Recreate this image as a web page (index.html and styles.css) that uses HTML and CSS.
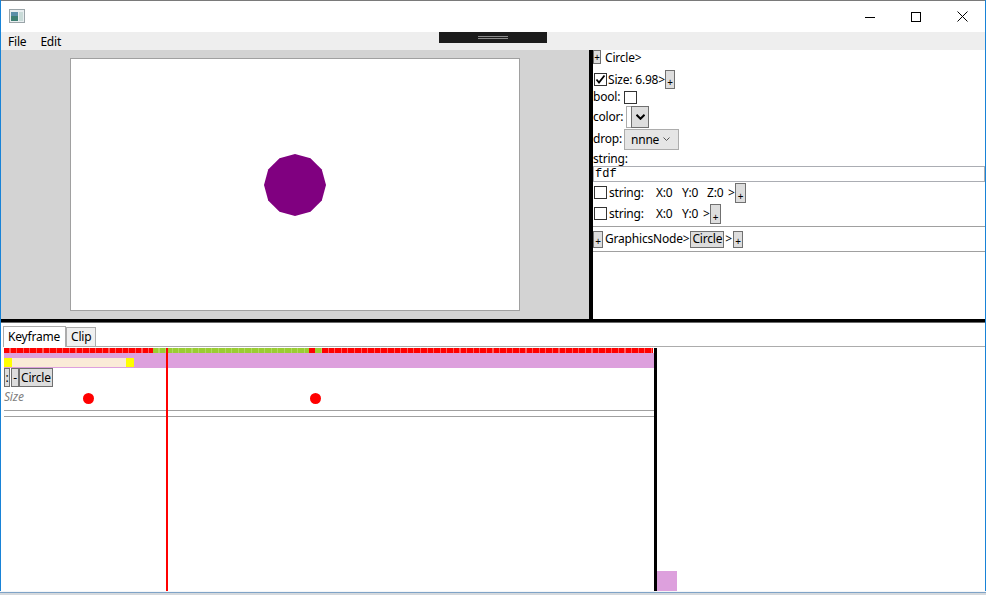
FILE: index.html
```html
<!DOCTYPE html>
<html>
<head>
<meta charset="utf-8">
<link rel="stylesheet" href="styles.css">
</head>
<body>
<div class="window">
  <div class="titlebar">
    <svg class="appicon" width="16" height="14" viewBox="0 0 16 14">
      <rect x="0.5" y="0.5" width="15" height="13" fill="#e8eef0" stroke="#9aa4a8"/>
      <rect x="2" y="3" width="7" height="9" fill="#3d7f72"/>
      <rect x="2" y="3" width="7" height="4" fill="#5a8fa8"/>
      <rect x="10" y="3" width="4" height="9" fill="#c9dbd8"/>
    </svg>
    <div class="spacer"></div>
    <div class="wbtn">
      <svg width="10" height="10" viewBox="0 0 10 10"><path d="M0 5.5H10" stroke="#000" stroke-width="1"/></svg>
    </div>
    <div class="wbtn">
      <svg width="10" height="10" viewBox="0 0 10 10"><rect x="0.5" y="0.5" width="9" height="9" fill="none" stroke="#000"/></svg>
    </div>
    <div class="wbtn">
      <svg width="11" height="11" viewBox="0 0 11 11"><path d="M0.5 0.5L10.5 10.5M10.5 0.5L0.5 10.5" stroke="#000" stroke-width="1"/></svg>
    </div>
  </div>
  <div class="menubar">
    <span class="menuitem">File</span>
    <span class="menuitem">Edit</span>
    <div class="grip"><i></i><i></i></div>
  </div>
  <div class="top">
    <div class="viewport">
      <div class="canvas">
        <svg class="shape" width="64" height="64" viewBox="-32 -32 64 64">
          <polygon fill="#800080" points="0,-31 15.5,-26.8 26.8,-15.5 31,0 26.8,15.5 15.5,26.8 0,31 -15.5,26.8 -26.8,15.5 -31,0 -26.8,-15.5 -15.5,-26.8"/>
        </svg>
      </div>
    </div>
    <div class="vsplit"></div>
    <div class="props">
      <div class="prow r1">
        <span class="btn plus p1">+</span><span class="txt">Circle&gt;</span>
      </div>
      <div class="prow r2">
        <span class="chk checked"><svg width="11" height="11" viewBox="0 0 11 11"><path d="M1.5 5.5L4 8.5L9.5 1.5" fill="none" stroke="#000" stroke-width="1.8"/></svg></span>
        <span class="txt">Size: 6.98&gt;</span><span class="btn plus p2">+</span>
      </div>
      <div class="prow r3">
        <span class="txt">bool:</span><span class="chk bool"></span>
      </div>
      <div class="prow r4">
        <span class="txt">color:</span>
        <span class="colorbox"><span class="cwhite"></span><span class="cbtn"><svg width="9" height="6" viewBox="0 0 9 6"><path d="M0.5 0.8L4.5 4.8L8.5 0.8" fill="none" stroke="#000" stroke-width="2"/></svg></span></span>
      </div>
      <div class="prow r5">
        <span class="txt">drop:</span>
        <span class="combo"><span class="ctext">nnne</span><svg width="7" height="5" viewBox="0 0 7 5"><path d="M0.5 0.5L3.5 3.5L6.5 0.5" fill="none" stroke="#555" stroke-width="1"/></svg></span>
      </div>
      <div class="prow r6"><span class="txt">string:</span></div>
      <div class="textbox">fdf</div>
      <div class="prow r7">
        <span class="chk"></span><span class="txt lbl">string:</span><span class="txt c1">X:0</span><span class="txt c2">Y:0</span><span class="txt c3">Z:0</span><span class="txt gt">&gt;</span><span class="btn plus p3">+</span>
      </div>
      <div class="prow r8">
        <span class="chk"></span><span class="txt lbl">string:</span><span class="txt c1">X:0</span><span class="txt c2">Y:0</span><span class="txt gt">&gt;</span><span class="btn plus p3">+</span>
      </div>
      <div class="prow r9">
        <span class="btn plus p4">+</span><span class="txt gn">GraphicsNode&gt;</span><span class="btn nodebtn">Circle</span><span class="txt">&gt;</span><span class="btn plus p5">+</span>
      </div>
    </div>
  </div>
  <div class="hsplit"></div>
  <div class="bottom">
    <div class="tabs">
      <div class="tab active">Keyframe</div>
      <div class="tab">Clip</div>
    </div>
    <div class="tabbody">
      <div class="track">
        <div class="ruler">
          <span class="seg red" style="width:149px"></span>
          <span class="seg green" style="width:156px"></span>
          <span class="seg red" style="width:6px"></span>
          <span class="seg green" style="width:7px"></span>
          <span class="seg red" style="width:331px"></span>
        </div>
        <div class="clipband">
          <div class="range">
            <span class="ymark"></span><span class="beige"></span><span class="ymark"></span>
          </div>
        </div>
        <div class="noderow">
          <span class="btn small colon">:</span><span class="btn small dash">-</span><span class="btn small">Circle</span>
        </div>
        <div class="sizerow">
          <span class="sizelbl">Size</span>
          <span class="dot" style="left:79px"></span>
          <span class="dot" style="left:306px"></span>
        </div>
        <div class="sep"></div>
      </div>
      <div class="endbar"></div>
      <div class="side"><div class="pinkbox"></div></div>
      <div class="playhead"></div>
    </div>
  </div>
</div>
</body>
</html>
```
FILE: styles.css
```css
* { box-sizing: border-box; }
html, body { margin: 0; padding: 0; }
body {
  width: 986px;
  height: 595px;
  overflow: hidden;
  background: linear-gradient(to bottom, #f4f6f8 0, #f4f6f8 1px, #7fa3c7 1px, #7fa3c7 2px, #d5d9dd 2px) 0 591px / 986px 4px no-repeat, #d5d9dd;
  font-family: "Noto Sans", "Segoe UI", sans-serif;
  font-size: 12px;
  letter-spacing: -0.2px;
  color: #000;
}
.window {
  width: 986px;
  height: 591px;
  border-left: 1px solid #1883d7;
  border-right: 1px solid #1883d7;
  display: flex;
  flex-direction: column;
  background: #fff;
}
.titlebar {
  height: 32px;
  display: flex;
  align-items: center;
  background: #fff;
  border-top: 1px solid #7a7a7a;
}
.appicon { margin-left: 8px; margin-top: -1px; }
.spacer { flex: 1; }
.wbtn {
  width: 46px;
  height: 31px;
  display: flex;
  align-items: center;
  justify-content: center;
}
.menubar {
  height: 18px;
  background: #eeeeee;
  display: flex;
  align-items: center;
  position: relative;
  padding-left: 7px;
  padding-top: 2px;
}
.menuitem { margin-right: 14px; line-height: 16px; }
.grip {
  position: absolute;
  left: 438px;
  top: 0;
  width: 108px;
  height: 11px;
  background: #1c1c1c;
  display: flex;
  flex-direction: column;
  align-items: center;
  padding-top: 4px;
  gap: 1px;
}
.grip i { display: block; width: 30px; height: 1px; background: #8c8c8c; }
.top {
  height: 269px;
  display: flex;
}
.viewport {
  width: 588px;
  background: #d3d3d3;
  padding: 8px 0 0 69px;
}
.canvas {
  width: 450px;
  height: 253px;
  background: #fff;
  border: 1px solid #a0a0a0;
  display: flex;
  align-items: flex-start;
  justify-content: flex-start;
  padding: 94px 0 0 192px;
}
.vsplit { width: 4px; background: #000; }
.props {
  flex: 1;
  background: #fff;
  display: flex;
  flex-direction: column;
}
.prow { display: flex; align-items: center; white-space: nowrap; }
.txt { line-height: 14px; }
.btn {
  background: #dddddd;
  border: 1px solid #707070;
  display: inline-flex;
  align-items: center;
  justify-content: center;
  line-height: 1;
}
.plus { font-size: 10px; align-items: flex-end; padding-bottom: 1px; }
.r1 { height: 20px; align-items: flex-start; }
.r1 .txt { margin-top: 1px; margin-left: 4px; }
.p1 { width: 8px; height: 14px; }
.r2 { height: 19px; }
.p2 { width: 10px; height: 19px; }
.chk {
  width: 13px;
  height: 13px;
  border: 1px solid #333;
  background: #fff;
  display: inline-flex;
  align-items: center;
  justify-content: center;
  margin-left: 1px;
}
.r2 .txt { margin-left: 1px; }
.r3 { height: 16px; }
.chk.bool { margin-left: 4px; }
.r4 { height: 23px; }
.colorbox {
  margin-left: 3px;
  height: 22px;
  display: flex;
}
.cwhite { width: 5px; border: 1px solid #acacac; border-right: none; background: #fff; }
.cbtn {
  width: 18px;
  background: #dddddd;
  border: 1px solid #707070;
  display: flex;
  align-items: center;
  justify-content: center;
}
.r5 { height: 22px; }
.combo {
  margin-left: 2px;
  width: 55px;
  height: 21px;
  background: #e5e5e5;
  border: 1px solid #acacac;
  display: flex;
  align-items: center;
  padding: 0 8px 0 6px;
  justify-content: space-between;
}
.ctext { font-size: 12px; }
.r6 { height: 16px; align-items: flex-end; }
.textbox {
  height: 16px;
  border: 1px solid #abadb3;
  font-family: "Liberation Mono", "DejaVu Sans Mono", monospace;
  font-size: 12px;
  letter-spacing: 0;
  line-height: 14px;
  padding-left: 1px;
}
.r7 { height: 21px; }
.r8 { height: 21px; }
.r7 .p3 { margin-top: 1px; }
.lbl { margin-left: 2px; width: 47px; }
.c1 { width: 26px; }
.c2 { width: 25px; }
.r8 .c2 { width: 21px; }
.c3 { width: 21px; }
.gt { margin-left: 0; width: 7px; }
.p3 { width: 11px; height: 20px; }
.r9 {
  height: 26px;
  margin-top: 2px;
  border-top: 1px solid #a0a0a0;
  border-bottom: 1px solid #a0a0a0;
  align-items: center;
}
.gn { margin-left: 2px; }
.p4 { width: 10px; height: 17px; }
.nodebtn { height: 17px; padding: 0 1px; margin: 0 1px; }
.p5 { width: 10px; height: 17px; margin-left: 1px; }
.hsplit {
  height: 4px;
  background: #000;
  border-bottom: 1px solid #6a6a6a;
}
.bottom {
  flex: 1;
  background: #fff;
  display: flex;
  flex-direction: column;
  padding: 2px 0 0 2px;
}
.tabs { display: flex; align-items: flex-end; height: 21px; }
.tab {
  height: 19px;
  padding: 0 4px;
  border: 1px solid #acacac;
  border-bottom: none;
  background: #f0f0f0;
  line-height: 17px;
}
.tab.active {
  height: 21px;
  background: #fff;
  padding: 0 5px 0 4px;
  margin-bottom: -1px;
  position: relative;
  z-index: 1;
  line-height: 19px;
}
.tabbody {
  flex: 1;
  border-top: 1px solid #acacac;
  padding-top: 1px;
  padding-left: 1px;
  display: flex;
  position: relative;
}
.track { width: 650px; display: flex; flex-direction: column; }
.ruler { height: 5px; display: flex; }
.seg { display: block; height: 5px; }
.seg.red {
  background: repeating-linear-gradient(90deg, #ff0000 0, #ff0000 5.5px, #ff5a5a 5.5px, #ff5a5a 6.6px);
}
.seg.green {
  background: repeating-linear-gradient(90deg, #9acd32 0, #9acd32 5.5px, #b0d860 5.5px, #b0d860 6.6px);
}
.clipband { height: 15px; background: #dda0dd; padding-top: 5px; }
.range { height: 9px; display: flex; }
.ymark { width: 8px; background: #ffff00; }
.beige { width: 114px; background: #faebd7; }
.noderow { height: 19px; display: flex; }
.small { height: 19px; padding: 0 1px; font-size: 12px; }
.colon { width: 6px; margin-right: 1px; }
.dash { width: 8px; }
.sizerow { height: 22px; position: relative; }
.sizelbl {
  font-style: italic;
  color: #808080;
  line-height: 20px;
}
.dot {
  position: absolute;
  top: 6px;
  width: 11px;
  height: 11px;
  border-radius: 50%;
  background: #ff0000;
}
.sep {
  height: 7px;
  border-top: 1px solid #a0a0a0;
  border-bottom: 1px solid #a0a0a0;
  margin-top: 1px;
}
.endbar { width: 3px; background: #000; }
.side {
  flex: 1;
  display: flex;
  flex-direction: column;
  justify-content: flex-end;
}
.pinkbox { width: 20px; height: 20px; background: #dda0dd; }
.playhead {
  position: absolute;
  left: 163px;
  top: 1px;
  bottom: 0;
  width: 2px;
  background: #ff0000;
}
```
